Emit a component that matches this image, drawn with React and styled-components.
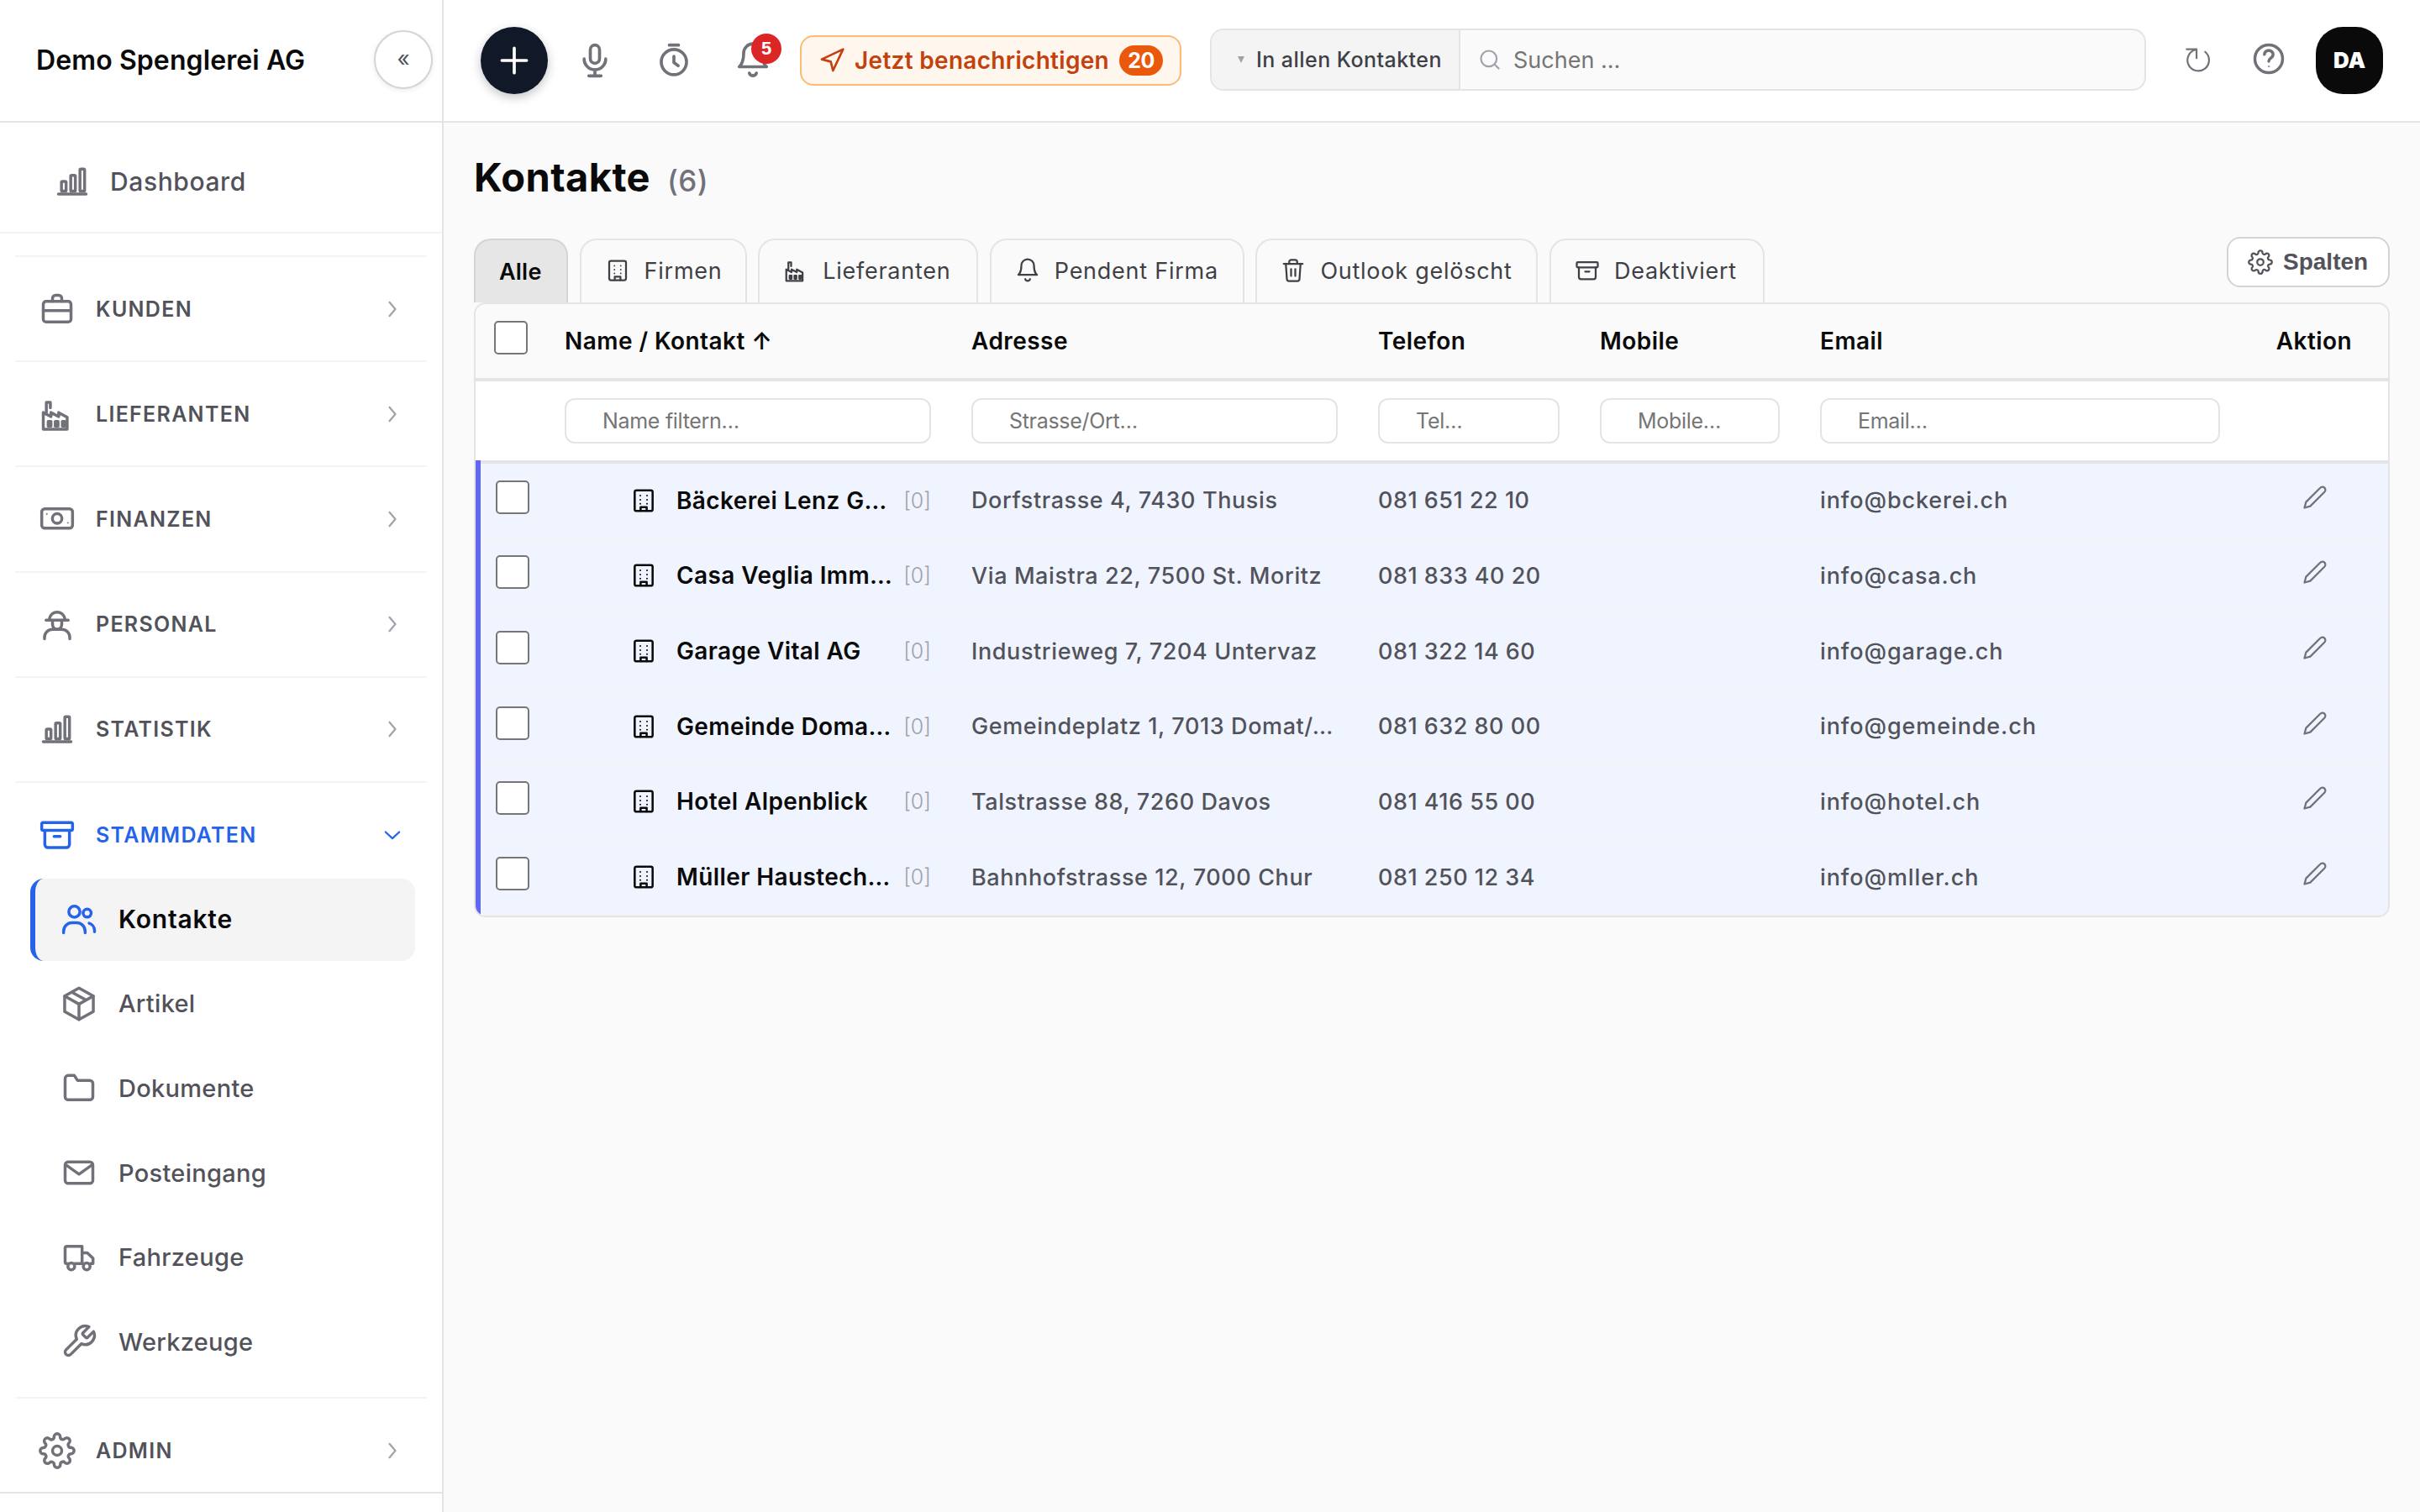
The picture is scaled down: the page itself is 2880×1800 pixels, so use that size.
import React, { useState } from 'react'
import styled, { createGlobalStyle, css } from 'styled-components'

const GlobalStyle = createGlobalStyle`
    * {
        box-sizing: border-box;
    }

    body {
        margin: 0;
        background: #fafafa;
        color: #0a0a0a;
        font-family: Inter, "Liberation Sans", sans-serif;
    }

    button, input {
        font-family: inherit;
    }
`

// ---------- icons ----------

const Svg = styled.svg`
    display: block;
    flex: none;
    width: ${p => p.$size}px;
    height: ${p => p.$size}px;
    fill: none;
    stroke: currentColor;
    stroke-linecap: round;
    stroke-linejoin: round;
`

const shapes = {
    chart: (
        <>
            <path d="M3 20.2h18" />
            <rect x="5" y="12" width="3" height="6.3" rx="0.6" />
            <rect x="11" y="8" width="3" height="10.3" rx="0.6" />
            <rect x="17" y="4" width="3" height="14.3" rx="0.6" />
        </>
    ),
    briefcase: (
        <>
            <rect x="3" y="7" width="18" height="13.3" rx="1.8" />
            <path d="M9 7V5a2 2 0 0 1 2-2h2a2 2 0 0 1 2 2v2M3 13h18" />
        </>
    ),
    factory: (
        <>
            <path d="M3 11v10.8h15.5V14l-5.5-3v2.6L8 11v2.6L3 11z" />
            <path d="M5 11V4.3h2.6v3.6" />
            <rect x="6.2" y="16.8" width="1.8" height="3" />
            <rect x="10.8" y="16.8" width="1.8" height="3" />
            <rect x="15.4" y="16.8" width="1.6" height="3" />
        </>
    ),
    cash: (
        <>
            <rect x="2" y="5.3" width="20" height="12.6" rx="2" />
            <circle cx="12" cy="11.6" r="3.1" />
            <circle cx="5.2" cy="8.7" r="0.35" strokeWidth="0.5" />
            <circle cx="19" cy="14.4" r="0.35" strokeWidth="0.5" />
        </>
    ),
    worker: (
        <>
            <path d="M4.8 9.4h14.4" />
            <path d="M7 9.2a5 5 0 0 1 10 0" />
            <path d="M9 9.6v2.4c0 2 1.2 3.4 3 3.4s3-1.4 3-3.4V9.6" />
            <path d="M3.8 21.6v-.8c0-3.2 2.3-5.4 5.4-5.4h5.6c3.1 0 5.4 2.2 5.4 5.4v.8" />
        </>
    ),
    archive: (
        <>
            <rect x="2" y="4" width="20" height="5" rx="1" />
            <path d="M4 9v9.2a2 2 0 0 0 2 2h12a2 2 0 0 0 2-2V9M10 13h4" />
        </>
    ),
    users: (
        <>
            <circle cx="9" cy="7.3" r="3.6" />
            <circle cx="17.3" cy="8.2" r="2.6" />
            <path d="M2 21v-1a5.5 5.5 0 0 1 5.5-5.5h3A5.5 5.5 0 0 1 16 20v1" />
            <path d="M18.6 14.8a5 5 0 0 1 3.5 4.8v.7" />
        </>
    ),
    box: (
        <>
            <path d="M12 1.8l9.3 5.2v10L12 22.2 2.7 17V7L12 1.8z" />
            <path d="M2.7 7l9.3 5.2L21.3 7M12 12.2v10M7.4 4.5l9.2 5.1" />
        </>
    ),
    folder: <path d="M3 6a2 2 0 0 1 2-2h4l2 3.2h8a2 2 0 0 1 2 2v8.6a2 2 0 0 1-2 2H5a2 2 0 0 1-2-2V6z" />,
    mail: (
        <>
            <rect x="3" y="5" width="18" height="14" rx="2" />
            <path d="M3.6 7l8.4 6 8.4-6" />
        </>
    ),
    truck: (
        <>
            <path d="M4.6 16H4a1 1 0 0 1-1-1V6a1.2 1.2 0 0 1 1.2-1.2H14V16H9.2" />
            <path d="M14 9h3.4l3.7 3.6V16h-1.6M14 16h.6" />
            <circle cx="7" cy="17.8" r="2.2" />
            <circle cx="17" cy="17.8" r="2.2" />
        </>
    ),
    wrench: <path d="M14.7 6.3a1 1 0 0 0 0 1.4l1.6 1.6a1 1 0 0 0 1.4 0l3.77-3.77a6 6 0 0 1-7.94 7.94l-6.91 6.91a2.12 2.12 0 0 1-3-3l6.91-6.91a6 6 0 0 1 7.94-7.94l-3.76 3.76z" />,
    gear: (
        <>
            <circle cx="12" cy="12" r="3" />
            <path d="M19.4 15a1.65 1.65 0 0 0 .33 1.82l.06.06a2 2 0 0 1 0 2.83 2 2 0 0 1-2.83 0l-.06-.06a1.65 1.65 0 0 0-1.82-.33 1.65 1.65 0 0 0-1 1.51V21a2 2 0 0 1-2 2 2 2 0 0 1-2-2v-.09A1.65 1.65 0 0 0 9 19.4a1.65 1.65 0 0 0-1.82.33l-.06.06a2 2 0 0 1-2.83 0 2 2 0 0 1 0-2.83l.06-.06a1.65 1.65 0 0 0 .33-1.82 1.65 1.65 0 0 0-1.51-1H3a2 2 0 0 1-2-2 2 2 0 0 1 2-2h.09A1.65 1.65 0 0 0 4.6 9a1.65 1.65 0 0 0-.33-1.82l-.06-.06a2 2 0 0 1 0-2.83 2 2 0 0 1 2.83 0l.06.06a1.65 1.65 0 0 0 1.82.33H9a1.65 1.65 0 0 0 1-1.51V3a2 2 0 0 1 2-2 2 2 0 0 1 2 2v.09a1.65 1.65 0 0 0 1 1.51 1.65 1.65 0 0 0 1.82-.33l.06-.06a2 2 0 0 1 2.83 0 2 2 0 0 1 0 2.83l-.06.06a1.65 1.65 0 0 0-.33 1.82V9a1.65 1.65 0 0 0 1.51 1H21a2 2 0 0 1 2 2 2 2 0 0 1-2 2h-.09a1.65 1.65 0 0 0-1.51 1z" />
        </>
    ),
    plus: <path d="M12 4v16M4 12h16" />,
    mic: (
        <>
            <rect x="9" y="2" width="6" height="11.8" rx="3" />
            <path d="M5 11a7 7 0 0 0 14 0M12 18v4M8 22h8" />
        </>
    ),
    timer: (
        <>
            <circle cx="12" cy="13" r="8.2" />
            <path d="M9 2h6M12 9.3v4.1l2.8 2" />
        </>
    ),
    bell: (
        <>
            <path d="M18 7.2a6 6 0 0 0-12 0c0 6.8-2.9 8.9-2.9 8.9h17.8S18 14 18 7.2" />
            <path d="M14.3 20.2a2.4 2.4 0 0 1-4.6 0" />
        </>
    ),
    send: <path d="M3 11L22 2l-9 19-2-8-8-2z" />,
    search: (
        <>
            <circle cx="11" cy="11" r="8" />
            <path d="M21 21l-4.3-4.3" />
        </>
    ),
    reload: <path d="M4 4.7h6.4v5.8M10.2 4.9A7 7 0 1 0 16 6.4" />,
    help: (
        <>
            <circle cx="12" cy="12" r="9" />
            <path d="M9.2 9.2a2.8 2.6 0 1 1 4.4 2.1c-.9.7-1.6 1.1-1.6 2.3" />
            <circle cx="12" cy="17" r="0.4" strokeWidth="0.4" />
        </>
    ),
    building: (
        <>
            <rect x="4" y="2.8" width="16" height="18.4" rx="1.6" />
            <path d="M9.3 21v-3.2h5.4V21" />
            <path d="M9 7.5h.01M15 7.5h.01M9 11.2h.01M15 11.2h.01M9 14.8h.01M15 14.8h.01" strokeWidth="1.5" />
        </>
    ),
    trash: (
        <>
            <path d="M3 5.6h18M8.2 5.6V3.8a2 2 0 0 1 2-2h3.6a2 2 0 0 1 2 2v1.8" />
            <path d="M5 5.6l1 14.6a2 2 0 0 0 2 1.9h8a2 2 0 0 0 2-1.9l1-14.6M10 10.6v6.6M14 10.6v6.6" />
        </>
    ),
    pencil: <path d="M17 3a2.83 2.83 0 1 1 4 4L7.5 20.5 2 22l1.5-5.5L17 3z" />,
    right: <path d="M9 5l6 7-6 7" />,
    down: <path d="M5 9l7 6.5L19 9" />,
}

const Icon = ({ name, size = 44, stroke = 1.9 }) => (
    <Svg $size={size} viewBox="0 0 24 24" strokeWidth={stroke}>
        {shapes[name]}
    </Svg>
)

// ---------- shell ----------

const Shell = styled.div`
    display: grid;
    grid-template-columns: 528px 1fr;
    height: 1800px;
    overflow: hidden;
`

const Sidebar = styled.aside`
    display: flex;
    flex-direction: column;
    min-height: 0;
    background: #fff;
    border-right: 2px solid #e4e4e7;
`

const Brand = styled.div`
    display: flex;
    align-items: center;
    justify-content: space-between;
    height: 146px;
    padding: 0 11px 2px 43px;
    border-bottom: 2px solid #e4e4e7;
    font-size: 32px;
    font-weight: 600;
    letter-spacing: 0.1px;
`

const Collapse = styled.button`
    width: 70px;
    height: 70px;
    padding: 0 0 4px;
    border: 2px solid #d4d4d8;
    border-radius: 50%;
    background: #fff;
    color: #52525b;
    font-size: 26px;
    box-shadow: 0 2px 6px rgba(0, 0, 0, 0.08);
`

const Nav = styled.nav`
    flex: 1;
    min-height: 0;
    overflow: hidden;
`

const Dashboard = styled.div`
    display: flex;
    align-items: center;
    gap: 23px;
    height: 132px;
    padding: 9px 0 0 64px;
    margin-bottom: 26px;
    border-bottom: 2px solid #f4f4f5;
    color: #52525b;
    font-size: 30px;
    font-weight: 500;
    letter-spacing: 0.6px;

    svg {
        color: #71717a;
    }
`

const Section = styled.section`
    margin: 0 18px;
    padding: 8px 0;
    border-top: 2px solid #f4f4f5;
`

const SectionHead = styled.div`
    display: flex;
    align-items: center;
    gap: 24px;
    height: 107.2px;
    padding: 0 27px 0 28px;
    color: ${p => (p.$open ? '#2563eb' : '#52525b')};
    font-size: 25px;
    font-weight: 600;
    letter-spacing: 1.3px;

    span {
        flex: 1;
    }

    svg:first-child {
        color: ${p => (p.$open ? '#2563eb' : '#71717a')};
    }

    svg:last-child {
        color: ${p => (p.$open ? '#2563eb' : '#a1a1aa')};
    }
`

const SubList = styled.div`
    display: grid;
    gap: 2.7px;
    margin-top: -1.2px;
    padding: 0 14px 8px 18px;
`

const SubItem = styled.div`
    display: flex;
    align-items: center;
    gap: 25px;
    height: 98px;
    padding: 0 0 2px 30px;
    border-left: 6px solid transparent;
    border-radius: 16px;
    color: #52525b;
    font-size: 29px;
    font-weight: 500;
    letter-spacing: 0.3px;

    svg {
        color: #71717a;
    }

    ${p => p.$active && css`
        border-left-color: #2563eb;
        background: #f4f4f5;
        color: #0a0a0a;
        font-size: 30px;
        font-weight: 600;
        letter-spacing: 0.8px;

        svg {
            color: #2563eb;
        }
    `}
`

const SideFoot = styled.div`
    height: 24px;
    border-top: 2px solid #e4e4e7;
`

// ---------- top bar ----------

const Main = styled.div`
    display: flex;
    flex-direction: column;
    min-width: 0;
`

const TopBar = styled.header`
    display: flex;
    align-items: center;
    height: 146px;
    padding: 0 44px;
    border-bottom: 2px solid #e4e4e7;
    background: #fff;
`

const AddButton = styled.button`
    display: grid;
    place-items: center;
    width: 80px;
    height: 80px;
    margin-right: 16px;
    padding: 0;
    border: 0;
    border-radius: 50%;
    background: #111827;
    color: #fff;
    box-shadow: 0 4px 12px rgba(17, 24, 39, 0.25);
`

const Tools = styled.div`
    display: flex;
    gap: 14px;
`

const ToolButton = styled.button`
    position: relative;
    display: grid;
    place-items: center;
    width: 80px;
    height: 80px;
    padding: 0;
    border: 0;
    background: none;
    color: #71717a;
`

const Badge = styled.span`
    position: absolute;
    top: 8px;
    left: 38px;
    min-width: 36px;
    height: 36px;
    border-radius: 18px;
    background: #dc2626;
    color: #fff;
    font: bold 22px/36px "Liberation Sans", Arial, sans-serif;
    text-align: center;
`

const Notify = styled.button`
    display: flex;
    align-items: center;
    width: 454px;
    height: 60px;
    margin-left: 16px;
    padding: 0 20px;
    border: 2px solid #fdba74;
    border-radius: 16px;
    background: #fff7ed;
    color: #c2410c;
    font-size: 28px;
    font-weight: 600;
    letter-spacing: 0.3px;
    white-space: nowrap;

    span {
        flex: 1;
        padding-left: 11px;
        text-align: left;
    }
`

const Count = styled.b`
    width: 52px;
    height: 36px;
    border-radius: 18px;
    background: #ea580c;
    color: #fff;
    font-size: 25px;
    font-weight: 700;
    line-height: 36px;
    text-align: center;
    letter-spacing: -0.5px;
`

const Search = styled.div`
    display: flex;
    flex: 1;
    height: 74px;
    margin: -2px 0 0 34px;
    border: 2px solid #e4e4e7;
    border-radius: 16px;
    background: #fafafa;
    overflow: hidden;
`

const Scope = styled.div`
    display: flex;
    align-items: center;
    gap: 14px;
    width: 296px;
    padding-left: 31px;
    border-right: 2px solid #e4e4e7;
    background: #f4f4f5;
    color: #3f3f46;
    font-size: 25px;
    font-weight: 500;
    letter-spacing: 0.45px;
    white-space: nowrap;

    &::before {
        content: '';
        border: 4px solid transparent;
        border-top: 8px solid #a1a1aa;
        border-bottom: 0;
    }
`

const SearchField = styled.label`
    display: flex;
    flex: 1;
    align-items: center;
    gap: 14px;
    padding-left: 21px;
    color: #a1a1aa;

    input {
        flex: 1;
        padding: 0;
        border: 0;
        outline: 0;
        background: none;
        font-size: 27px;
    }

    input::placeholder {
        color: #757575;
    }
`

const Reload = styled.button`
    margin-left: 41px;
    padding: 0;
    border: 0;
    background: none;
    color: #71717a;
`

const Help = styled.button`
    margin: -4px 34px 0 39px;
    padding: 0;
    border: 0;
    background: none;
    color: #71717a;
`

const Avatar = styled.div`
    width: 80px;
    height: 80px;
    border-radius: 32px;
    background: #0a0a0a;
    color: #fff;
    font-size: 26px;
    font-weight: 900;
    line-height: 80px;
    text-align: center;
`

// ---------- page ----------

const Page = styled.main`
    padding: 0 36px;
`

const Title = styled.h1`
    display: flex;
    align-items: baseline;
    gap: 20px;
    height: 136px;
    margin: 0;
    font-size: 47px;
    font-weight: 700;
    line-height: 130px;
    letter-spacing: 0.4px;

    small {
        color: #71717a;
        font-size: 35px;
        font-weight: 500;
        line-height: 1;
    }
`

const TabBar = styled.div`
    display: flex;
    align-items: flex-start;
    justify-content: space-between;
    height: 78px;
`

const Tabs = styled.div`
    display: flex;
    gap: 13.6px;
    padding-top: 2px;
`

const Tab = styled.div`
    display: flex;
    align-items: center;
    gap: 17px;
    width: ${p => p.$width}px;
    height: 76px;
    padding: 0 0 2px 28px;
    border: 2px solid #e4e4e7;
    border-bottom: 0;
    border-radius: 20px 20px 0 0;
    background: #fafafa;
    color: #3f3f46;
    font-size: 27px;
    font-weight: 400;
    letter-spacing: 0.75px;
    white-space: nowrap;
    cursor: pointer;

    ${p => p.$active && css`
        padding-bottom: 0;
        border-color: #d4d4d8;
        background: #e6e6e6;
        color: #0a0a0a;
        font-weight: 600;
        letter-spacing: 0.2px;
    `}
`

const Columns = styled.button`
    display: flex;
    align-items: center;
    gap: 12px;
    width: 194px;
    height: 60px;
    padding: 0 0 0 23px;
    border: 2px solid #d4d4d8;
    border-radius: 16px;
    background: #fff;
    color: #52525b;
    font: bold 28px "Liberation Sans", Arial, sans-serif;
`

const Panel = styled.div`
    height: 732px;
    border: 2px solid #e4e4e7;
    border-radius: 14px;
    overflow: hidden;
`

const gridCols = css`
    display: grid;
    grid-template-columns: 82px 484px 484px 264px 262px 524px 176px;
    align-items: center;
`

const HeadRow = styled.div`
    ${gridCols}
    height: 92px;
    border-bottom: 4px solid #e4e4e7;
    background: #fafafa;
    font-size: 28px;
    font-weight: 600;
    letter-spacing: 0.45px;
`

const FilterRow = styled.div`
    ${gridCols}
    height: 94px;
    background: #fff;
`

const Cell = styled.div`
    min-width: 0;
    padding: 0 24px;
    letter-spacing: ${p => p.$spacing || 'inherit'};
    white-space: nowrap;
    text-align: ${p => p.$align || 'left'};
`

const Filter = styled.input`
    display: block;
    width: 100%;
    height: 54px;
    padding: 0 43px;
    border: 2px solid #e4e4e7;
    border-radius: 12px;
    background: #fff;
    font-size: 25px;
    letter-spacing: -0.3px;

    &::placeholder {
        color: #757575;
    }
`

const Check = styled.input.attrs({ type: 'checkbox' })`
    display: block;
    appearance: none;
    width: 40px;
    height: 40px;
    margin: ${p => p.$margin};
    border: 2px solid #767676;
    border-radius: 5px;
    background: #fff;

    &:checked {
        background: #2563eb;
    }
`

const Body = styled.div`
    border-left: 6px solid #6366f1;
    background: #f0f4ff;

    &::before {
        content: '';
        display: block;
        height: 4px;
        background: #e4e4e7;
    }
`

const Row = styled.div`
    ${gridCols}
    grid-template-columns: 76px 484px 484px 264px 262px 524px 176px;
    height: 89.67px;
    border-bottom: 2px solid #f3f4f6;
    color: #52525b;
    font-size: 27px;
    font-weight: 500;
`

const Contact = styled.div`
    display: flex;
    align-items: center;
    padding: 0 24px 0 102px;
    color: #0a0a0a;

    strong {
        flex: 1;
        min-width: 0;
        padding-left: 23px;
        font-size: 28px;
        font-weight: 600;
        letter-spacing: 0.4px;
        white-space: nowrap;
    }

    small {
        color: #a1a1aa;
        font-size: 25px;
        font-weight: 300;
    }
`

const Edit = styled.button`
    justify-self: center;
    margin: -8px 0 0 2px;
    padding: 0;
    border: 0;
    background: none;
    color: #71717a;
`

const sections = [
    { label: 'KUNDEN', icon: 'briefcase' },
    { label: 'LIEFERANTEN', icon: 'factory' },
    { label: 'FINANZEN', icon: 'cash' },
    { label: 'PERSONAL', icon: 'worker' },
    { label: 'STATISTIK', icon: 'chart' },
    {
        label: 'STAMMDATEN',
        icon: 'archive',
        items: [
            ['Kontakte', 'users'],
            ['Artikel', 'box'],
            ['Dokumente', 'folder'],
            ['Posteingang', 'mail'],
            ['Fahrzeuge', 'truck'],
            ['Werkzeuge', 'wrench'],
        ],
    },
    { label: 'ADMIN', icon: 'gear' },
]

const tabs = [
    { label: 'Alle', width: 112 },
    { label: 'Firmen', icon: 'building', width: 199 },
    { label: 'Lieferanten', icon: 'factory', width: 262 },
    { label: 'Pendent Firma', icon: 'bell', width: 303 },
    { label: 'Outlook gelöscht', icon: 'trash', width: 336 },
    { label: 'Deaktiviert', icon: 'archive', width: 256 },
]

const filters = ['Name filtern…', 'Strasse/Ort…', 'Tel…', 'Mobile…', 'Email…']

const contacts = [
    { name: 'Bäckerei Lenz G…', address: 'Dorfstrasse 4, 7430 Thusis', phone: '081 651 22 10', email: 'info@bckerei.ch' },
    { name: 'Casa Veglia Imm…', address: 'Via Maistra 22, 7500 St. Moritz', phone: '081 833 40 20', email: 'info@casa.ch' },
    { name: 'Garage Vital AG', address: 'Industrieweg 7, 7204 Untervaz', phone: '081 322 14 60', email: 'info@garage.ch' },
    { name: 'Gemeinde Doma…', address: 'Gemeindeplatz 1, 7013 Domat/…', phone: '081 632 80 00', email: 'info@gemeinde.ch' },
    { name: 'Hotel Alpenblick', address: 'Talstrasse 88, 7260 Davos', phone: '081 416 55 00', email: 'info@hotel.ch' },
    { name: 'Müller Haustech…', address: 'Bahnhofstrasse 12, 7000 Chur', phone: '081 250 12 34', email: 'info@mller.ch' },
]

function App() {
    const [tab, setTab] = useState('Alle')

    return (
        <Shell>
            <GlobalStyle />
            <Sidebar>
                <Brand>
                    Demo Spenglerei AG
                    <Collapse>«</Collapse>
                </Brand>
                <Nav>
                    <Dashboard>
                        <Icon name="chart" />
                        Dashboard
                    </Dashboard>
                    {sections.map(s => (
                        <Section key={s.label}>
                            <SectionHead $open={!!s.items}>
                                <Icon name={s.icon} />
                                <span>{s.label}</span>
                                <Icon name={s.items ? 'down' : 'right'} size={28} />
                            </SectionHead>
                            {s.items && (
                                <SubList>
                                    {s.items.map(([label, icon]) => (
                                        <SubItem key={label} $active={label === 'Kontakte'}>
                                            <Icon name={icon} />
                                            {label}
                                        </SubItem>
                                    ))}
                                </SubList>
                            )}
                        </Section>
                    ))}
                </Nav>
                <SideFoot />
            </Sidebar>
            <Main>
                <TopBar>
                    <AddButton><Icon name="plus" stroke={2} /></AddButton>
                    <Tools>
                        <ToolButton><Icon name="mic" stroke={2} /></ToolButton>
                        <ToolButton><Icon name="timer" stroke={2} /></ToolButton>
                        <ToolButton>
                            <Icon name="bell" stroke={2} />
                            <Badge>5</Badge>
                        </ToolButton>
                    </Tools>
                    <Notify>
                        <Icon name="send" size={32} stroke={2} />
                        <span>Jetzt benachrichtigen</span>
                        <Count>20</Count>
                    </Notify>
                    <Search>
                        <Scope>In allen Kontakten</Scope>
                        <SearchField>
                            <Icon name="search" size={28} />
                            <input placeholder="Suchen …" />
                        </SearchField>
                    </Search>
                    <Reload><Icon name="reload" stroke={1.2} /></Reload>
                    <Help><Icon name="help" /></Help>
                    <Avatar>DA</Avatar>
                </TopBar>
                <Page>
                    <Title>
                        Kontakte <small>(6)</small>
                    </Title>
                    <TabBar>
                        <Tabs>
                            {tabs.map(t => (
                                <Tab key={t.label} $width={t.width} $active={t.label === tab} onClick={() => setTab(t.label)}>
                                    {t.icon && <Icon name={t.icon} size={30} stroke={1.8} />}
                                    {t.label}
                                </Tab>
                            ))}
                        </Tabs>
                        <Columns>
                            <Icon name="gear" size={30} stroke={1.8} />
                            Spalten
                        </Columns>
                    </TabBar>
                    <Panel>
                        <HeadRow>
                            <Check $margin="-8px 0 0 22px" />
                            <Cell>Name / Kontakt ↑</Cell>
                            <Cell>Adresse</Cell>
                            <Cell>Telefon</Cell>
                            <Cell>Mobile</Cell>
                            <Cell>Email</Cell>
                            <Cell $align="center">Aktion</Cell>
                        </HeadRow>
                        <FilterRow>
                            <Cell />
                            {filters.map(f => (
                                <Cell key={f}><Filter placeholder={f} /></Cell>
                            ))}
                            <Cell />
                        </FilterRow>
                        <Body>
                            {contacts.map(c => (
                                <Row key={c.name}>
                                    <Check $margin="-8px 0 0 18px" />
                                    <Contact>
                                        <Icon name="building" size={32} />
                                        <strong>{c.name}</strong>
                                        <small>[0]</small>
                                    </Contact>
                                    <Cell $spacing="0.6px">{c.address}</Cell>
                                    <Cell $spacing="0.5px">{c.phone}</Cell>
                                    <Cell />
                                    <Cell $spacing="0.9px">{c.email}</Cell>
                                    <Edit><Icon name="pencil" size={30} stroke={1.8} /></Edit>
                                </Row>
                            ))}
                        </Body>
                    </Panel>
                </Page>
            </Main>
        </Shell>
    )
}

export default App
